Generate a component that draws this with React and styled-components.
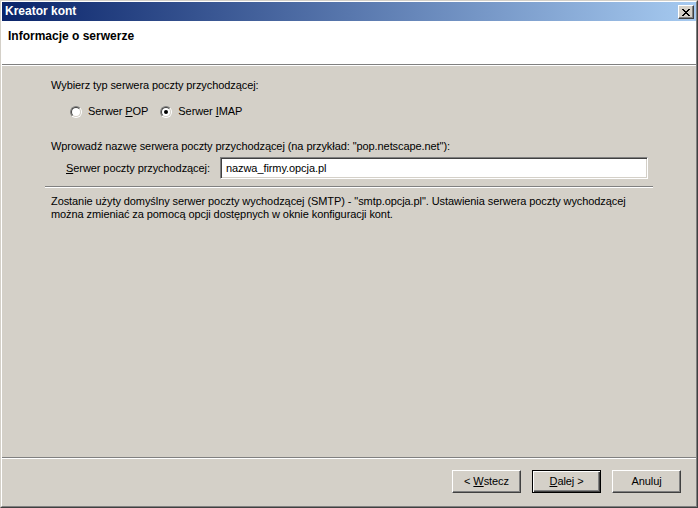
import styled, { createGlobalStyle } from "styled-components";

const GlobalStyle = createGlobalStyle`
  html, body {
    margin: 0;
    padding: 0;
    background: #d4d0c8;
  }
  body {
    font-family: Tahoma, "Liberation Sans", Arial, sans-serif;
    font-size: 11px;
    letter-spacing: -0.08px;
    color: #000;
  }
`;

const Window = styled.div`
  width: 698px;
  height: 508px;
  box-sizing: border-box;
  border-style: solid;
  border-width: 1px;
  border-color: #d4d0c8 #404040 #404040 #d4d0c8;
  background: #d4d0c8;
`;

const Frame = styled.div`
  height: 100%;
  box-sizing: border-box;
  border-style: solid;
  border-width: 1px;
  border-color: #fff #808080 #808080 #fff;
  display: flex;
  flex-direction: column;
`;

const TitleBar = styled.div`
  height: 19px;
  display: flex;
  align-items: center;
  padding: 0 2px 0 3px;
  background: linear-gradient(to right, #0a246a, #a6caf0);
  color: #fff;
  font-weight: bold;
  font-size: 12px;
  letter-spacing: 0;
  flex-shrink: 0;
`;

const TitleText = styled.span`
  flex: 1;
  line-height: 13px;
`;

const CloseButton = styled.div`
  width: 16px;
  height: 14px;
  box-sizing: border-box;
  background: #d4d0c8;
  border-style: solid;
  border-width: 1px;
  border-color: #fff #404040 #404040 #fff;
  box-shadow: inset -1px -1px #808080;
  display: flex;
  align-items: center;
  justify-content: center;
  margin-top: 1px;
`;

const Header = styled.div`
  height: 43px;
  background: #fff;
  padding: 8px 0 0 6px;
  box-sizing: border-box;
  font-weight: bold;
  font-size: 12px;
  letter-spacing: 0;
  line-height: 14px;
  flex-shrink: 0;
`;

const Etched = styled.div`
  height: 2px;
  box-sizing: border-box;
  border-top: 1px solid #808080;
  border-bottom: 1px solid #fff;
  flex-shrink: 0;
  margin: ${(p) => p.$margin || "0"};
`;

const Body = styled.div`
  flex: 1;
  padding: 0 43px;
  display: flex;
  flex-direction: column;
`;

const Prompt = styled.div`
  line-height: 13px;
  margin: ${(p) => p.$margin || "0"};
  padding-left: 6px;
`;

const RadioRow = styled.div`
  display: flex;
  align-items: center;
  gap: 12px;
  margin: 13px 0 0 25px;
  height: 13px;
`;

const RadioItem = styled.label`
  display: flex;
  align-items: center;
  gap: 6px;
  line-height: 13px;
`;

const RadioOuter = styled.span`
  width: 12px;
  height: 12px;
  box-sizing: border-box;
  border-radius: 50%;
  border: 1px solid;
  border-color: #808080 #fff #fff #808080;
  display: flex;
`;

const RadioInner = styled.span`
  flex: 1;
  border-radius: 50%;
  border: 1px solid;
  border-color: #404040 #d4d0c8 #d4d0c8 #404040;
  background: #fff;
  display: flex;
  align-items: center;
  justify-content: center;

  &::after {
    content: "";
    width: 4px;
    height: 4px;
    border-radius: 50%;
    background: ${(p) => (p.$checked ? "#000" : "transparent")};
  }
`;

const FieldRow = styled.div`
  display: flex;
  align-items: center;
  margin: 4px 0 0 21px;
`;

const FieldLabel = styled.span`
  width: 154px;
  line-height: 13px;
`;

const TextInput = styled.div`
  width: 428px;
  height: 22px;
  box-sizing: border-box;
  background: #fff;
  border-style: solid;
  border-width: 1px;
  border-color: #808080 #fff #fff #808080;
  box-shadow: inset 1px 1px #404040, inset -1px -1px #d4d0c8;
  padding: 0 5px;
  display: flex;
  align-items: center;
`;

const Footer = styled.div`
  height: 47px;
  box-sizing: border-box;
  display: flex;
  justify-content: flex-end;
  gap: 11px;
  padding: 11px 15px 0 0;
  flex-shrink: 0;
`;

const Button = styled.div`
  width: 69px;
  height: 23px;
  box-sizing: border-box;
  background: #d4d0c8;
  border: 1px solid;
  border-color: ${(p) => (p.$default ? "#000" : "#fff #404040 #404040 #fff")};
  box-shadow: ${(p) =>
    p.$default
      ? "inset 1px 1px #fff, inset -1px -1px #404040, inset -2px -2px #808080"
      : "inset -1px -1px #808080"};
  display: flex;
  align-items: center;
  justify-content: center;
  line-height: 13px;
`;

const Radio = ({ checked, children }) => (
  <RadioItem>
    <RadioOuter>
      <RadioInner $checked={checked} />
    </RadioOuter>
    <span>{children}</span>
  </RadioItem>
);

export default function App() {
  return (
    <>
      <GlobalStyle />
      <Window>
        <Frame>
          <TitleBar>
            <TitleText>Kreator kont</TitleText>
            <CloseButton>
              <svg width="8" height="7" viewBox="0 0 8 7" shapeRendering="crispEdges">
                <path d="M0 0h2v1h-2zM6 0h2v1h-2zM1 1h2v1h-2zM5 1h2v1h-2zM2 2h4v1h-4zM3 3h2v1h-2zM2 4h4v1h-4zM1 5h2v1h-2zM5 5h2v1h-2zM0 6h2v1h-2zM6 6h2v1h-2z" fill="#000" />
              </svg>
            </CloseButton>
          </TitleBar>
          <Header>Informacje o serwerze</Header>
          <Etched />
          <Body>
            <Prompt $margin="13px 0 0 0">Wybierz typ serwera poczty przychodzącej:</Prompt>
            <RadioRow>
              <Radio>
                Serwer <u>P</u>OP
              </Radio>
              <Radio checked>
                Serwer <u>I</u>MAP
              </Radio>
            </RadioRow>
            <Prompt $margin="22px 0 0 0">
              Wprowadź nazwę serwera poczty przychodzącej (na przykład: "pop.netscape.net"):
            </Prompt>
            <FieldRow>
              <FieldLabel>
                <u>S</u>erwer poczty przychodzącej:
              </FieldLabel>
              <TextInput>nazwa_firmy.opcja.pl</TextInput>
            </FieldRow>
            <Etched $margin="7px 0 0 0" />
            <Prompt $margin="7px 0 0 0">
              Zostanie użyty domyślny serwer poczty wychodzącej (SMTP) - "smtp.opcja.pl". Ustawienia serwera poczty wychodzącej
              <br />
              można zmieniać za pomocą opcji dostępnych w oknie konfiguracji kont.
            </Prompt>
          </Body>
          <Etched />
          <Footer>
            <Button>
              &lt;&nbsp;<u>W</u>stecz
            </Button>
            <Button $default>
              <u>D</u>alej &gt;
            </Button>
            <Button>Anuluj</Button>
          </Footer>
        </Frame>
      </Window>
    </>
  );
}
